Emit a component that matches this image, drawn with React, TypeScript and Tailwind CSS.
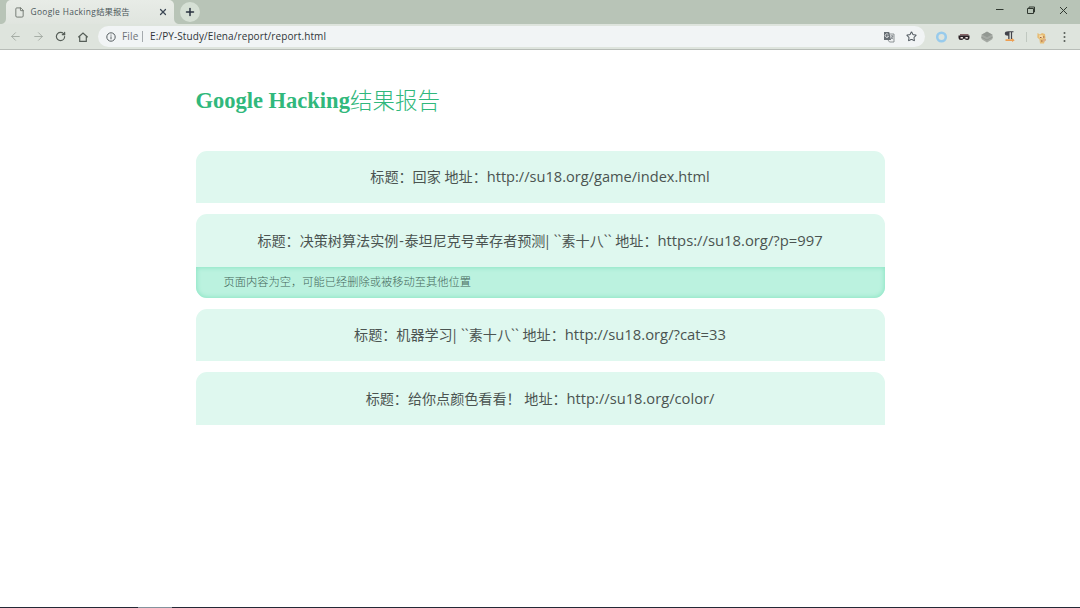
import React from "react";
import { ArrowLeft, ArrowRight, RotateCw, X, Plus, Star, File } from "lucide-react";

const ui = "font-['Open_Sans','Noto_Sans_CJK_SC',sans-serif]";

type Result = { title: React.ReactNode; url: string; detail?: string; scale: string };

const Pipe = () => <span className="-ml-[2px] tracking-[-1.2px]">|</span>;

const results: Result[] = [
  { title: "回家", url: "http://su18.org/game/index.html", scale: "text-[14.6px]" },
  {
    title: (
      <>
        决策树算法实例<span className="px-[0.8px]">-</span>泰坦尼克号幸存者预测<Pipe /> ``素十八``
      </>
    ),
    url: "https://su18.org/?p=997",
    detail: "页面内容为空，可能已经删除或被移动至其他位置",
    scale: "text-[14.8px]",
  },
  {
    title: (
      <>
        机器学习<Pipe /> ``素十八``
      </>
    ),
    url: "http://su18.org/?cat=33",
    scale: "text-[14.8px]",
  },
  { title: "给你点颜色看看！", url: "http://su18.org/color/", scale: "text-[14.7px]" },
];

function TabBar() {
  return (
    <div className="flex h-[24px] items-start bg-[#b8c4b7]">
      <svg className="h-[24px] w-[6px] shrink-0" viewBox="0 0 6 24">
        <path d="M0 24C4 24 6 22 6 18V24Z" fill="#e0e5df" />
      </svg>
      <div className="flex h-[24px] w-[168px] items-center rounded-t-[5px] bg-gradient-to-b from-[#e8ece7] to-[#e0e5df] pl-[8px] pr-[6px]">
        <File size={11} strokeWidth={1.8} className="text-[#606760]" />
        <span className="ml-[5.5px] whitespace-nowrap text-[8.4px] leading-none text-[#4b575b]">
          <span className="tracking-[0.35px]">Google Hacking</span>结果报告
        </span>
        <X size={10} strokeWidth={2.9} className="ml-auto text-[#3d4855]" />
      </div>
      <svg className="h-[24px] w-[6px] shrink-0" viewBox="0 0 6 24">
        <path d="M6 24C2 24 0 22 0 18V24Z" fill="#e0e5df" />
      </svg>
      <div className="mt-[2px] flex h-[20px] w-[20px] items-center justify-center rounded-full bg-[#d6e0d5]">
        <Plus size={12} strokeWidth={3} className="text-[#29313f]" />
      </div>
      <svg className="ml-auto h-[20px] w-[84px]" viewBox="0 0 84 20" fill="none" stroke="#303830">
        <path d="M0 9.5H7.5" />
        <path d="M31.5 8.5H37.5V13.5H31.5ZM33 8V7H38.5V12H38" />
        <path d="M64 7L71 14M71 7L64 14" />
      </svg>
    </div>
  );
}

function InfoIcon() {
  return (
    <svg width="10" height="10" viewBox="0 0 10 10" fill="none" stroke="#565d61">
      <circle cx="5" cy="5" r="4.2" />
      <path d="M5 4.4V7.3M5 2.6V3.6" />
    </svg>
  );
}

function TranslateIcon() {
  return (
    <svg width="12" height="12" viewBox="0 0 12 12">
      <path d="M5 3H11V11H6.5L5 9Z" fill="#eef0f1" stroke="#777d82" strokeWidth=".8" />
      <path d="M1 1H6.2L8 9H1Z" fill="#666d73" />
      <path d="M5.3 3.5A1.8 1.8 0 1 0 5.6 5.2H4" fill="none" stroke="#f1f3f4" strokeWidth=".8" />
      <path d="M7.5 5H10.3M9 4.2V5M9.8 5Q9.3 7 8 8M8.3 6.2L10 8.2" fill="none" stroke="#666d73" strokeWidth=".7" />
    </svg>
  );
}

function Extensions() {
  return (
    <svg className="ml-auto h-[24px] w-[150px]" viewBox="0 0 150 24">
      <circle cx="11.5" cy="12" r="4.3" fill="none" stroke="#98cbec" strokeWidth="2.5" />
      <path d="M30 9.2H38.5V10.5H30Z" fill="#70434a" />
      <path d="M28.5 10.5H39.5V13Q39.5 15 37.3 15Q35.5 15 34.7 13.8H33.6Q32.8 15 31 15Q28.5 15 28.5 13Z" fill="#281f23" />
      <path d="M30.5 11.9H32.9V13.6H30.5ZM35.4 11.9H37.8V13.6H35.4Z" fill="#f0e6e4" />
      <path d="M57 6.5L60.3 8.4L62.5 9.6V14L60.3 15.5L57 17.5L53.7 15.5L51.5 14V9.6L53.7 8.4Z" fill="#a5aaa4" />
      <path d="M57 6.8L62 9.5L57 12.3L52 9.5Z" fill="#929892" />
      <path d="M51.2 12L57 15L62.8 12" fill="none" stroke="#929892" />
      <path d="M83.5 6.3H78.3Q74.8 6.3 74.8 8.6Q74.8 10.8 78.2 10.8V14H79.5V7.2H80.9V14H82.1V7.2H83.5Z" fill="#41424a" />
      <path d="M75.5 14.3H82V13L84.7 15.3L82 17.1V16H75.5Z" fill="#ed9e51" />
      <path d="M96.5 7V17" stroke="#c0c8c0" />
      <path d="M107.5 8L110 9.6L112 8L115 9L115.5 13L114 18.5H110L109.5 14.5L107.3 12.5Z" fill="#e6bd76" />
      <path d="M109 10.5L112.5 10L113 13L110 13.5Z" fill="#f9dfad" />
      <path d="M110 12.5H111.5M113 12H114.4M111 16H112.5" stroke="#9b5d40" />
      <path d="M113 14H116V15.5L113.5 17Z" fill="#ddad8b" />
      <circle cx="134.5" cy="8" r="1" fill="#555c56" />
      <circle cx="134.5" cy="12" r="1" fill="#555c56" />
      <circle cx="134.5" cy="16" r="1" fill="#555c56" />
    </svg>
  );
}

function Toolbar() {
  return (
    <div className="flex h-[26px] items-center border-b border-[#b8bdb8] bg-[#dee4dd] pl-[9px]">
      <ArrowLeft size={13} strokeWidth={1.8} className="text-[#a5aca5]" />
      <ArrowRight size={13} strokeWidth={1.8} className="ml-[10px] text-[#a5aca5]" />
      <RotateCw size={11} strokeWidth={2.6} className="ml-[10px] text-[#565e58]" />
      <svg className="ml-[11px]" width="12" height="12" viewBox="0 0 12 12" fill="none" stroke="#565e58" strokeWidth="1.2">
        <path d="M1.3 6.3L6 2L10.7 6.3M2.7 5.3V10.3H9.3V5.3" />
      </svg>
      <div className="ml-[9px] flex h-[21px] w-[827px] items-center rounded-full bg-[#f1f4f5] pl-[8px] pr-[8px]">
        <InfoIcon />
        <span className="ml-[6px] w-[17px] pb-[2px] text-[10px] leading-none tracking-[0.15px] text-[#6c7175]">File</span>
        <span className="ml-[3px] h-[11px] w-px bg-[#a5aaae]" />
        <span className="ml-[7px] whitespace-nowrap pb-[2px] text-[10px] leading-none tracking-[0.1px] text-[#303538]">
          E:/PY-Study/Elena/report/report.html
        </span>
        <span className="ml-auto flex items-center gap-[11px]">
          <TranslateIcon />
          <Star size={11} strokeWidth={2.2} className="text-[#535b62]" />
        </span>
      </div>
      <Extensions />
    </div>
  );
}

function ResultCard({ result }: { result: Result }) {
  return (
    <article>
      <div className="flex h-[52.6px] items-center justify-center rounded-t-[11px] bg-[#dff8ef] text-[14.1px] text-[#4b5451]">
        <span className="whitespace-pre leading-[20px]">
          标题：{result.title} 地址：<span className={result.scale}>{result.url}</span>
        </span>
      </div>
      {result.detail && (
        <div className="flex h-[31.2px] items-center rounded-b-[11px] bg-[#bbf2df] pl-[28px] font-['Liberation_Serif','Noto_Sans_CJK_SC',serif] text-[11.25px] font-light text-[#44665a] shadow-[inset_0_0_4px_1px_#8fe6c6]">
          {result.detail}
        </div>
      )}
    </article>
  );
}

export default function App() {
  return (
    <div className={`flex h-[608px] w-full flex-col overflow-hidden bg-white ${ui}`}>
      <TabBar />
      <Toolbar />
      <main className="mx-auto w-[689px] flex-1 pt-[34px]">
        <h1 className="flex h-[34px] items-center whitespace-nowrap font-['Liberation_Serif','Noto_Sans_CJK_SC',serif] text-[22.5px] text-[#30b87c]">
          <span className="font-bold">Google Hacking</span>
          <span className="pt-px font-light">结果报告</span>
        </h1>
        <div className="mt-[32.6px] flex flex-col gap-[10.8px]">
          {results.map((result) => (
            <ResultCard key={result.url} result={result} />
          ))}
        </div>
      </main>
      <div className="flex h-[1px] bg-[#242936]">
        <span className="ml-[138px] w-[34px] bg-[#84939d]" />
      </div>
    </div>
  );
}
